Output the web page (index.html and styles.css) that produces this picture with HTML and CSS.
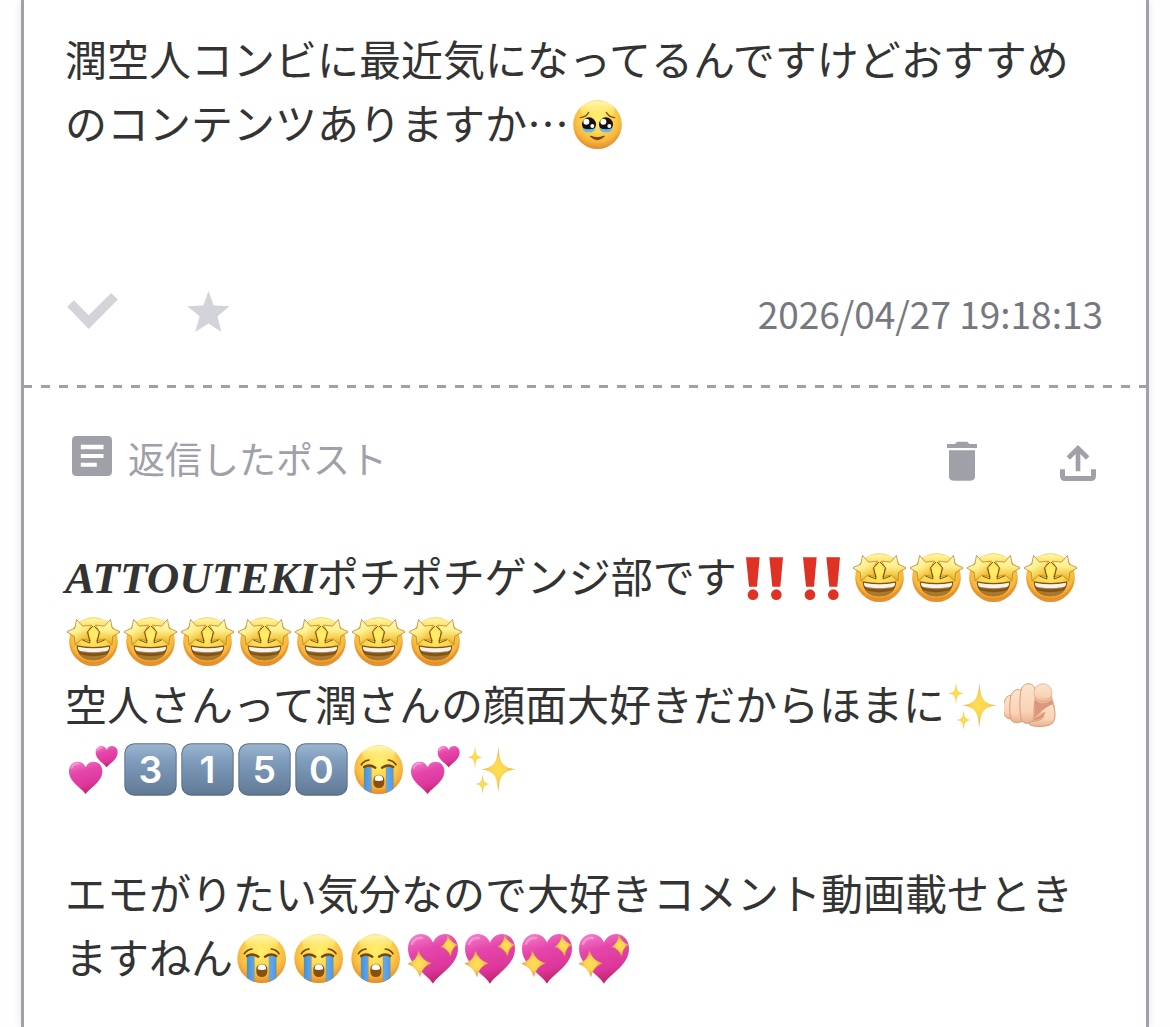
FILE: index.html
```html
<!DOCTYPE html>
<html lang="ja">

<head>
    <meta charset="UTF-8">
    <meta name="viewport" content="width=device-width, initial-scale=1.0">
    <title>返信したポスト</title>
    <link rel="stylesheet" href="styles.css">
</head>

<body>
    <!-- Emoji symbols -->
    <svg class="sprite" aria-hidden="true">
        <defs>
            <radialGradient id="face" cx="0.5" cy="0.36" r="0.66">
                <stop offset="0" stop-color="#fff06c"/>
                <stop offset="0.45" stop-color="#fdd84e"/>
                <stop offset="0.75" stop-color="#f6b53d"/>
                <stop offset="1" stop-color="#df8428"/>
            </radialGradient>
            <linearGradient id="shine" x1="0" y1="0" x2="0" y2="1">
                <stop offset="0" stop-color="#fff9b8"/>
                <stop offset="1" stop-color="#fff27a" stop-opacity="0"/>
            </linearGradient>
            <linearGradient id="gold" x1="0" y1="0" x2="0.3" y2="1">
                <stop offset="0" stop-color="#fffbd0"/>
                <stop offset="0.55" stop-color="#fff190"/>
                <stop offset="1" stop-color="#eebb2e"/>
            </linearGradient>
            <radialGradient id="spark">
                <stop offset="0" stop-color="#ffe14d"/>
                <stop offset="0.5" stop-color="#fad256"/>
                <stop offset="1" stop-color="#e0a03c"/>
            </radialGradient>
            <linearGradient id="tear" x1="0" y1="0" x2="1" y2="0">
                <stop offset="0" stop-color="#4293e0"/>
                <stop offset="0.5" stop-color="#7dbcf5"/>
                <stop offset="1" stop-color="#4b9be8"/>
            </linearGradient>
            <linearGradient id="pink" x1="0.3" y1="0" x2="0.6" y2="1">
                <stop offset="0" stop-color="#f077c4"/>
                <stop offset="0.3" stop-color="#e546ab"/>
                <stop offset="0.7" stop-color="#dd379b"/>
                <stop offset="1" stop-color="#bd1f62"/>
            </linearGradient>
            <linearGradient id="steel" x1="0" y1="0" x2="0" y2="1">
                <stop offset="0" stop-color="#9bb4cf"/>
                <stop offset="0.35" stop-color="#7e9bbb"/>
                <stop offset="1" stop-color="#627a96"/>
            </linearGradient>
            <linearGradient id="skin" x1="0" y1="0" x2="0" y2="1">
                <stop offset="0" stop-color="#fce3cd"/>
                <stop offset="0.7" stop-color="#f8d3b7"/>
                <stop offset="1" stop-color="#e8b08e"/>
            </linearGradient>
            <path id="heart" d="M50 98C40 80 0 62 0 29C0 11 12 0 26 0C38 0 46 7 50 17C54 7 62 0 74 0C88 0 100 11 100 29C100 62 60 80 50 98Z"/>
            <path id="glint" d="M0-68C4-18 14-5 53 0C14 5 4 18 0 68C-4 18-14 5-53 0C-14-5-4-18 0-68Z" fill="url(#spark)"/>
            <path id="star" d="M0-40L12-16L39-12L20 7L24 33L0 21L-24 33L-20 7L-39-12L-12-16Z" fill="url(#gold)" stroke="#b5791d" stroke-width="2" stroke-linejoin="round"/>
        </defs>

        <symbol id="tears" viewBox="0 0 159 159">
            <circle cx="79.5" cy="80" r="73" fill="url(#face)"/>
            <ellipse cx="79.5" cy="35" rx="52" ry="26" fill="url(#shine)"/>
            <g fill="none" stroke="#8a4b14" stroke-width="4" stroke-linecap="round">
                <path d="M28 59Q45 57 53 43"/>
                <path d="M131 59Q114 57 106 43"/>
            </g>
            <circle cx="54" cy="79" r="21" fill="#160f12"/>
            <circle cx="105" cy="79" r="21" fill="#160f12"/>
            <path d="M34 89Q54 98 74 89Q72 103 54 103Q36 103 34 89ZM85 89Q105 98 125 89Q123 103 105 103Q87 103 85 89Z" fill="#62bce9"/>
            <g fill="#fff">
                <circle cx="46" cy="71" r="9"/>
                <circle cx="97" cy="71" r="9"/>
                <circle cx="64" cy="84" r="6"/>
                <circle cx="115" cy="84" r="6"/>
            </g>
            <path d="M59 115Q79 134 99 115Q79 124 59 115Z" fill="#7a4315" stroke="#7a4315" stroke-width="4" stroke-linejoin="round"/>
        </symbol>

        <symbol id="star-struck" viewBox="0 0 159 159" overflow="visible">
            <circle cx="79.5" cy="80" r="73" fill="url(#face)"/>
            <path d="M7 82A73 73 0 0 0 152 82C142 118 118 141 79 141S17 118 7 82Z" fill="#e68a26" opacity="0.8"/>
            <ellipse cx="79.5" cy="27" rx="42" ry="17" fill="url(#shine)"/>
            <path d="M29 91Q79 101 130 91C130 119 108 136 79 136S29 119 29 91Z" fill="#85520f"/>
            <path d="M36 117Q79 130 123 117Q108 136 79 136T36 117Z" fill="#a8782c"/>
            <path d="M33 95Q79 104 126 95Q128 105 117 109Q79 115 42 109Q31 105 33 95Z" fill="#f6f3ee"/>
            <path d="M42 110Q79 117 117 110" fill="none" stroke="#bba98e" stroke-width="2"/>
            <use href="#star" transform="translate(39 52) rotate(-15)"/>
            <use href="#star" transform="translate(120 52) rotate(15)"/>
            <path d="M78 33L62 50L69 84L46 75M81 33L97 50L90 84L113 75" fill="none" stroke="#80500f" stroke-width="3" stroke-linejoin="round"/>
        </symbol>

        <symbol id="crying" viewBox="0 0 159 159">
            <circle cx="80" cy="80" r="73" fill="url(#face)"/>
            <ellipse cx="80" cy="33" rx="50" ry="24" fill="url(#shine)"/>
            <path d="M36 71H58V149Q46 145 36 138ZM102 71H124V138Q114 145 102 149Z" fill="url(#tear)" stroke="#b87924" stroke-width="1"/>
            <g fill="none" stroke="#79450f" stroke-linecap="round">
                <path d="M28 65Q36 53 51 51M109 51Q124 53 132 65" stroke-width="5"/>
                <path d="M36 72Q52 62 70 74M90 74Q108 62 124 72" stroke-width="7"/>
            </g>
            <rect x="64" y="95" width="33" height="40" rx="16" fill="#87500f"/>
            <path d="M68 112Q67 97 80 97Q94 97 93 112Q80 116 68 112Z" fill="#fff"/>
        </symbol>

        <symbol id="sparkles" viewBox="0 0 159 159">
            <use href="#glint" transform="translate(97 79)"/>
            <use href="#glint" transform="translate(27 43) scale(0.42 0.49)"/>
            <use href="#glint" transform="translate(50 123) scale(0.42 0.44)"/>
        </symbol>

        <symbol id="pointing" viewBox="0 0 159 159" overflow="visible">
            <path d="M96 60L142 48C152 68 156 100 152 120C150 138 135 143 112 142C90 142 74 138 76 129L62 128L72 40Z" fill="#eab99b"/>
            <g fill="url(#skin)" stroke="#d99c78" stroke-width="3">
                <path d="M24 50C8 46 0 62-2 84C-3 105 3 118 16 119L30 122V52Z"/>
                <path d="M58 38C42 26 25 32 20 53C16 78 16 108 22 124C30 134 46 132 56 126Z"/>
                <path d="M94 36C92 8 60 8 52 30C46 58 46 98 52 122C58 136 78 136 86 126Q92 116 94 66Z"/>
                <path d="M93 66Q87 94 91 113Q100 108 111 96Q126 82 146 72Q158 105 150 124C142 142 108 148 78 138C73 133 78 127 90 127Q109 126 121 112" stroke-linejoin="round"/>
            </g>
            <path d="M92 62Q116 84 144 62L146 76Q124 84 111 96Q100 108 91 113Z" fill="#dc977a"/>
            <circle cx="117" cy="41" r="27" fill="url(#skin)" stroke="#dda583" stroke-width="2"/>
            <path d="M94 120Q114 115 121 102" fill="none" stroke="#c97b57" stroke-width="6" stroke-linecap="round" opacity="0.6"/>
        </symbol>

        <symbol id="two-hearts" viewBox="0 0 159 159">
            <use href="#heart" transform="translate(6 56)" fill="url(#pink)"/>
            <use href="#heart" transform="translate(86 9) scale(0.66)" fill="url(#pink)"/>
            <path d="M14 75Q20 60 35 62M91 22Q95 13 104 14" fill="none" stroke="#ffb5e5" stroke-width="5" stroke-linecap="round" opacity="0.6"/>
        </symbol>

        <symbol id="sparkling-heart" viewBox="0 0 159 159" overflow="visible">
            <use href="#heart" transform="translate(6 6) scale(1.5 1.52)" fill="url(#pink)"/>
            <path d="M18 35Q27 15 48 18" fill="none" stroke="#ffb5e5" stroke-width="8" stroke-linecap="round" opacity="0.5"/>
            <g fill="url(#spark)" stroke="#e39a38" stroke-width="1">
                <path d="M37 56Q46 84 76 94Q49 103 42 134Q34 106 5 95Q34 85 37 56Z"/>
                <path d="M125 9Q133 31 155 38Q136 47 134 73Q126 50 104 44Q123 34 125 9Z"/>
            </g>
        </symbol>

        <symbol id="bangs" viewBox="0 0 159 159">
            <g fill="#e03224">
                <path d="M21 19H62L54 107H30ZM91 19H132L124 107H100Z"/>
                <circle cx="42" cy="131" r="16"/>
                <circle cx="112" cy="131" r="16"/>
            </g>
        </symbol>

        <symbol id="keycap" viewBox="0 0 159 159">
            <rect x="1" y="1" width="157" height="157" rx="30" fill="#566d88"/>
            <rect x="4" y="4" width="151" height="150" rx="27" fill="url(#steel)"/>
        </symbol>
    </svg>

    <main class="card">
        <section class="message">
            <p class="text">潤空人コンビに最近気になってるんですけどおすすめのコンテンツありますか…<svg class="emoji"><use href="#tears"/></svg></p>
            <div class="message-footer">
                <div class="marks">
                    <button class="icon-button" type="button" aria-label="既読">
                        <svg class="icon-check" viewBox="0 0 153 109"><path d="M0 42L20 22L65 67L133 0L153 20L65 109Z"/></svg>
                    </button>
                    <button class="icon-button" type="button" aria-label="お気に入り">
                        <svg class="icon-star" viewBox="0 0 128 124"><path d="M64 0L80 44L128 46L91 76L103 124L64 98L24 124L37 76L0 46L48 44Z"/></svg>
                    </button>
                </div>
                <time class="date" datetime="2026-04-27T19:18:13">2026/04/27 19:18:13</time>
            </div>
        </section>

        <hr class="divider">

        <section class="reply">
            <header class="reply-header">
                <h2 class="reply-title">
                    <svg class="icon-post" viewBox="0 0 118 118"><path fill-rule="evenodd" d="M13 0H105Q118 0 118 13V105Q118 118 105 118H13Q0 118 0 105V13Q0 0 13 0ZM26 26V39H93V26ZM26 53V65H93V53ZM26 79V91H73V79Z"/></svg>
                    返信したポスト
                </h2>
                <div class="actions">
                    <button class="icon-button" type="button" aria-label="削除">
                        <svg class="icon-trash" viewBox="0 0 90 120"><path d="M0 9H24L30 2H61L67 9H90V21H0ZM6 28H84V106Q84 119 71 119H19Q6 119 6 106Z"/></svg>
                    </button>
                    <button class="icon-button" type="button" aria-label="共有">
                        <svg class="icon-share" viewBox="0 0 108 108"><path d="M54 0L88 34L78 44L61 27V79H47V27L30 44L20 34ZM0 73H15V93H93V73H108V93Q108 108 93 108H15Q0 108 0 93Z"/></svg>
                    </button>
                </div>
            </header>

            <p class="text"><b class="math">ATTOUTEKI</b>ポチポチゲンジ部です<svg class="emoji"><use href="#bangs"/></svg><svg class="emoji"><use href="#bangs"/></svg><svg class="emoji"><use href="#star-struck"/></svg><svg class="emoji"><use href="#star-struck"/></svg><svg class="emoji"><use href="#star-struck"/></svg><svg class="emoji"><use href="#star-struck"/></svg><svg class="emoji"><use href="#star-struck"/></svg><svg class="emoji"><use href="#star-struck"/></svg><svg class="emoji"><use href="#star-struck"/></svg><svg class="emoji"><use href="#star-struck"/></svg><svg class="emoji"><use href="#star-struck"/></svg><svg class="emoji"><use href="#star-struck"/></svg><svg class="emoji"><use href="#star-struck"/></svg><br>空人さんって潤さんの顔面大好きだからほまに<svg class="emoji"><use href="#sparkles"/></svg><svg class="emoji"><use href="#pointing"/></svg><svg class="emoji"><use href="#two-hearts"/></svg><svg class="emoji" viewBox="0 0 159 159"><use href="#keycap"/><text class="digit" x="79" y="119">3</text></svg><svg class="emoji" viewBox="0 0 159 159"><use href="#keycap"/><text class="digit" x="79" y="119">1</text></svg><svg class="emoji" viewBox="0 0 159 159"><use href="#keycap"/><text class="digit" x="79" y="119">5</text></svg><svg class="emoji" viewBox="0 0 159 159"><use href="#keycap"/><text class="digit" x="79" y="119">0</text></svg><svg class="emoji"><use href="#crying"/></svg><svg class="emoji"><use href="#two-hearts"/></svg><svg class="emoji"><use href="#sparkles"/></svg></p>
            <p class="text">エモがりたい気分なので大好きコメント動画載せときますねん<svg class="emoji"><use href="#crying"/></svg><svg class="emoji"><use href="#crying"/></svg><svg class="emoji"><use href="#crying"/></svg><svg class="emoji"><use href="#sparkling-heart"/></svg><svg class="emoji"><use href="#sparkling-heart"/></svg><svg class="emoji"><use href="#sparkling-heart"/></svg><svg class="emoji"><use href="#sparkling-heart"/></svg></p>
        </section>
    </main>
</body>

</html>
```
FILE: styles.css
```css
* {
    margin: 0;
    padding: 0;
    box-sizing: border-box;
}

body {
    font-family: "Noto Sans CJK JP", sans-serif;
    background-color: #fefefe;
    color: #333;
    padding: 0 21px;
}

.sprite {
    position: absolute;
    width: 0;
    height: 0;
}

.card {
    min-height: 100vh;
    background-color: #fff;
    border: solid #a0a0a9;
    border-width: 0 3px;
    box-shadow: 0 0 8px rgba(0, 0, 0, 0.1);
}

.message {
    padding: 26px 43px 42px 41px;
}

.reply {
    padding: 40px 43px 36px 41px;
}

.text {
    font-size: 42px;
    line-height: 64px;
}

.text + .text {
    margin-top: 61px;
}

.math {
    font-family: "Liberation Serif", serif;
    font-size: 45px;
    font-style: italic;
    line-height: 1;
}

.emoji {
    width: 53px;
    height: 53px;
    margin: 0 2px;
    vertical-align: -11px;
}

.digit {
    font-family: Inter, sans-serif;
    font-size: 112px;
    font-weight: 600;
    text-anchor: middle;
    fill: #fff;
}

.message-footer {
    display: flex;
    align-items: center;
    justify-content: space-between;
    margin-top: 129px;
}

.marks {
    display: flex;
    align-items: center;
    gap: 69px;
    padding: 0 0 4px 2px;
}

.date {
    color: #777780;
    font-size: 37px;
    line-height: 60px;
}

.divider {
    height: 3px;
    border: none;
    background: repeating-linear-gradient(to right, #a0a0a9 0 8px, transparent 8px 17px, #a0a0a9 17px 18px);
}

.reply-header {
    display: flex;
    align-items: center;
    justify-content: space-between;
    padding: 0 7px;
    margin-bottom: 55px;
}

.reply-title {
    display: flex;
    align-items: center;
    gap: 16px;
    color: #a0a0a9;
    font-size: 37px;
    font-weight: 400;
    line-height: 60px;
}

.actions {
    display: flex;
    align-items: flex-end;
    gap: 83px;
    padding-top: 5px;
}

.icon-button {
    display: flex;
    border: none;
    background: none;
    color: #a0a0a9;
    cursor: pointer;
}

.marks .icon-button {
    color: #d3d3da;
}

.icon-button svg,
.icon-post {
    fill: currentColor;
}

.icon-check {
    width: 51px;
    height: 36px;
}

.icon-star {
    width: 43px;
    height: 41px;
}

.icon-post {
    width: 40px;
    height: 40px;
    margin-bottom: 4px;
}

.icon-trash {
    width: 30px;
    height: 40px;
}

.icon-share {
    width: 36px;
    height: 36px;
}
```
